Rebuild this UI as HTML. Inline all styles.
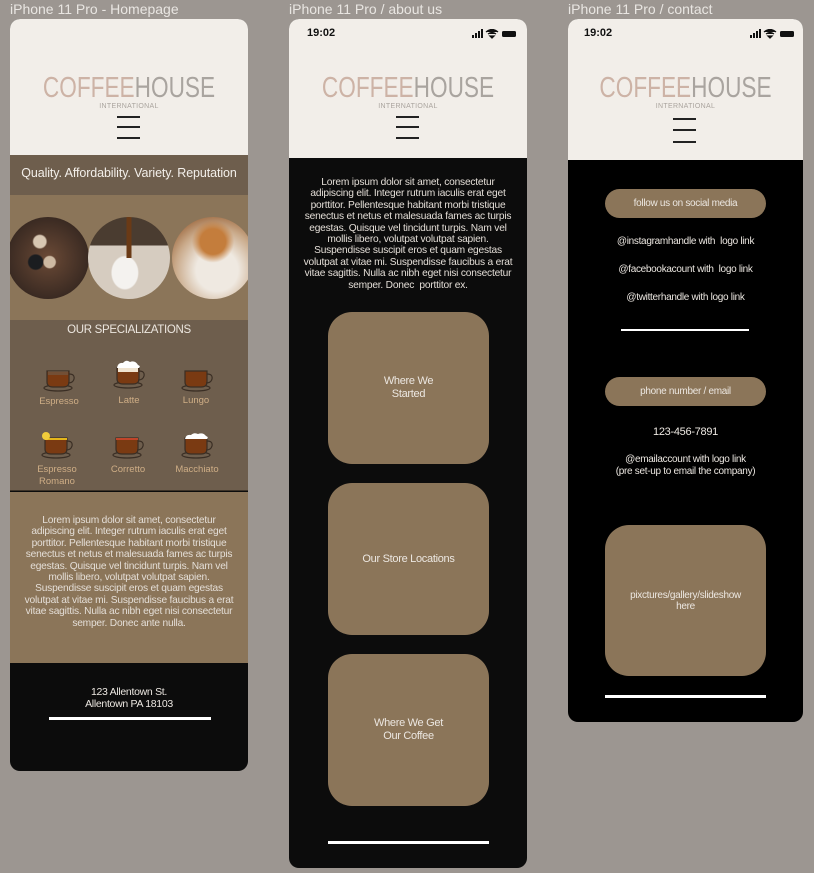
<!DOCTYPE html>
<html><head><meta charset="utf-8">
<style>
*{margin:0;padding:0;box-sizing:border-box}
body{width:814px;height:873px;background:#9c9691;position:relative;overflow:hidden;font-family:"Liberation Sans",sans-serif}
.abs{position:absolute}
.title{color:#e9e6e2;font-size:14px;top:1px}
.phone{position:absolute;border-radius:10px;overflow:hidden}
.cream{background:#f2eee9;position:absolute;left:0;right:0;top:0}
.logo{position:absolute;left:0;right:0;text-align:center;font-size:29px;letter-spacing:0px;font-weight:normal;line-height:30px;transform:scaleX(0.78)}
.logo .c{color:#cdb3a6}.logo .h{color:#a9a49f}
.intl{position:absolute;left:0;right:0;text-align:center;font-size:7px;color:#aaa49e;letter-spacing:0.3px}
.ham{position:absolute;width:23px;height:1.5px;background:#222}
.lorem{position:absolute;text-align:center;color:#e4ded7;font-size:10.2px;line-height:11.4px;letter-spacing:-0.2px}
.card{position:absolute;background:#8b7559;border-radius:24px;color:#ece7e1;font-size:11px;text-align:center;display:flex;align-items:center;justify-content:center;line-height:13px;letter-spacing:-0.3px}
.pill{position:absolute;background:#8b7559;border-radius:15px;color:#ece7e1;font-size:10px;text-align:center;line-height:29px;letter-spacing:-0.3px}
.w{position:absolute;left:0;right:0;text-align:center;color:#ece7e1;font-size:10px;letter-spacing:-0.3px}
.bar{position:absolute;height:3px;background:#fff}
.circ{position:absolute;width:82px;height:82px;border-radius:50%}
.cup{position:absolute;width:34px;height:30px}
.lab{position:absolute;width:70px;text-align:center;color:#cfae86;font-size:9.5px;line-height:12px}
</style></head><body>

<div class="abs title" style="left:10px">iPhone 11 Pro - Homepage</div>
<div class="abs title" style="left:289px">iPhone 11 Pro / about us</div>
<div class="abs title" style="left:568px">iPhone 11 Pro / contact</div>

<!-- PHONE 1 -->
<div class="phone" style="left:10px;top:19px;width:238px;height:752px;background:#0c0c0c">
  <div class="cream" style="height:136px"></div>
  <div class="logo" style="top:54px"><span class="c">COFFEE</span><span class="h">HOUSE</span></div>
  <div class="intl" style="top:84px">INTERNATIONAL</div>
  <div class="ham" style="left:107px;top:97px"></div>
  <div class="ham" style="left:107px;top:107px"></div>
  <div class="ham" style="left:107px;top:118px"></div>
  <div class="abs" style="left:0;right:0;top:136px;height:40px;background:#6e5e4d;color:#f3efea;font-size:12.5px;text-align:center;line-height:37px;letter-spacing:-0.1px">Quality. Affordability. Variety. Reputation</div>
  <div class="abs" style="left:0;right:0;top:176px;height:125px;background:#8b7559"></div>
  <div class="circ" style="left:-3px;top:198px;background:radial-gradient(circle at 40% 30%,#d8c7b2 0 8%,transparent 10%),radial-gradient(circle at 52% 55%,#cdb9a2 0 9%,transparent 11%),radial-gradient(circle at 35% 55%,#1b1d20 0 10%,transparent 12%),radial-gradient(circle,#6b4a36 0,#3a2a22 70%)"></div>
  <div class="circ" style="left:78px;top:198px;background:linear-gradient(90deg,transparent 47%,#6a3a16 47% 53%,transparent 53%) 0 0/100% 50% no-repeat,radial-gradient(ellipse at 45% 68%,#f4f2ef 0 20%,transparent 22%),linear-gradient(180deg,#4a3c30 0 35%,#d6ccc0 35%)"></div>
  <div class="circ" style="left:162px;top:198px;background:radial-gradient(circle at 50% 30%,#c47d3c 0 18%,transparent 30%),radial-gradient(circle at 55% 65%,#efe9e1 0 30%,#c9a989 60%,#a27048 80%)"></div>
  <div class="abs" style="left:0;right:0;top:301px;height:171px;background:#6e5e4d;border-bottom:1px solid #3d3328"></div>
  <div class="abs" style="left:0;right:0;top:305px;text-align:center;color:#ece6df;font-size:11.5px;letter-spacing:-0.3px">OUR SPECIALIZATIONS</div>
  <svg width="0" height="0" style="position:absolute"><defs>
   <g id="cupb"><ellipse cx="15" cy="26" rx="14" ry="3" fill="none" stroke="#3a2e24" stroke-width="1.2"/><path d="M4 9 H26 V20 Q26 25 20 25 H10 Q4 25 4 20 Z" fill="#7a3a12" stroke="#3a2e24" stroke-width="1.2"/><path d="M26 12 Q32 12 31 17 Q30 21 25 21" fill="none" stroke="#3a2e24" stroke-width="1.2"/></g>
  </defs></svg>
  <svg class="cup" style="left:33px;top:343px" viewBox="0 0 34 30"><use href="#cupb"/><rect x="5" y="9" width="20" height="4" fill="#6e5e4d" opacity=".6"/></svg>
  <svg class="cup" style="left:103px;top:340px" viewBox="0 0 34 30"><use href="#cupb"/><rect x="5" y="9" width="20" height="4" fill="#f0e3cf"/><path d="M4 9 Q5 3 10 4 Q13 0 17 3 Q22 1 25 6 Q28 7 26 9 Z" fill="#fff"/></svg>
  <svg class="cup" style="left:171px;top:343px" viewBox="0 0 34 30"><use href="#cupb"/></svg>
  <svg class="cup" style="left:31px;top:410px" viewBox="0 0 34 30"><use href="#cupb"/><rect x="4" y="9" width="22" height="2" fill="#e4b51a"/><circle cx="5" cy="7" r="4" fill="#f1cc3b"/></svg>
  <svg class="cup" style="left:102px;top:410px" viewBox="0 0 34 30"><use href="#cupb"/><rect x="4" y="9" width="22" height="2" fill="#c0452a"/></svg>
  <svg class="cup" style="left:171px;top:410px" viewBox="0 0 34 30"><use href="#cupb"/><path d="M4 10 Q5 5 10 6 Q13 3 17 5 Q22 3 25 7 Q28 8 26 10 Z" fill="#fff"/></svg>
  <div class="lab" style="left:14px;top:377px">Espresso</div>
  <div class="lab" style="left:84px;top:376px">Latte</div>
  <div class="lab" style="left:151px;top:376px">Lungo</div>
  <div class="lab" style="left:12px;top:445px">Espresso<br>Romano</div>
  <div class="lab" style="left:83px;top:445px">Corretto</div>
  <div class="lab" style="left:152px;top:445px">Macchiato</div>
  <div class="abs" style="left:0;right:0;top:473px;height:171px;background:#8b7559"></div>
  <div class="lorem" style="left:10px;right:10px;top:496px">Lorem ipsum dolor sit amet, consectetur adipiscing elit. Integer rutrum iaculis erat eget porttitor. Pellentesque habitant morbi tristique senectus et netus et malesuada fames ac turpis egestas. Quisque vel tincidunt turpis. Nam vel mollis libero, volutpat volutpat sapien. Suspendisse suscipit eros et quam egestas volutpat at vitae mi. Suspendisse faucibus a erat vitae sagittis. Nulla ac nibh eget nisi consectetur semper. Donec ante nulla.</div>
  <div class="w" style="top:667px;font-size:10.5px;line-height:12px">123 Allentown St.<br>Allentown PA 18103</div>
  <div class="bar" style="left:39px;width:162px;top:698px"></div>
</div>

<!-- PHONE 2 -->
<div class="phone" style="left:289px;top:19px;width:238px;height:849px;background:#0c0c0c">
  <div class="cream" style="height:139px"></div>
  <div class="abs" style="left:18px;top:8px;font-size:11px;font-weight:bold;color:#111">19:02</div>
  <svg class="abs" style="left:183px;top:10px" width="48" height="10"><rect x="0" y="6" width="2" height="3" fill="#111"/><rect x="3" y="4" width="2" height="5" fill="#111"/><rect x="6" y="2" width="2" height="7" fill="#111"/><rect x="9" y="0" width="2" height="9" fill="#111"/><path d="M14 3 Q20 -2 26 3 M16 5 Q20 2 24 5 M18 7 L20 9 L22 7 Z" stroke="#111" stroke-width="1.3" fill="#111"/><rect x="30" y="2" width="14" height="6" rx="1.5" fill="#111"/></svg>
  <div class="logo" style="top:54px"><span class="c">COFFEE</span><span class="h">HOUSE</span></div>
  <div class="intl" style="top:84px">INTERNATIONAL</div>
  <div class="ham" style="left:107px;top:97px"></div>
  <div class="ham" style="left:107px;top:107px"></div>
  <div class="ham" style="left:107px;top:118px"></div>
  <div class="lorem" style="left:10px;right:10px;top:158px">Lorem ipsum dolor sit amet, consectetur adipiscing elit. Integer rutrum iaculis erat eget porttitor. Pellentesque habitant morbi tristique senectus et netus et malesuada fames ac turpis egestas. Quisque vel tincidunt turpis. Nam vel mollis libero, volutpat volutpat sapien. Suspendisse suscipit eros et quam egestas volutpat at vitae mi. Suspendisse faucibus a erat vitae sagittis. Nulla ac nibh eget nisi consectetur semper. Donec &nbsp;porttitor ex.</div>
  <div class="card" style="left:39px;top:293px;width:161px;height:152px">Where We<br>Started</div>
  <div class="card" style="left:39px;top:464px;width:161px;height:152px">Our Store Locations</div>
  <div class="card" style="left:39px;top:635px;width:161px;height:152px">Where We Get<br>Our Coffee</div>
  <div class="bar" style="left:39px;width:161px;top:822px"></div>
</div>

<!-- PHONE 3 -->
<div class="phone" style="left:568px;top:19px;width:235px;height:703px;background:#000">
  <div class="cream" style="height:141px"></div>
  <div class="abs" style="left:16px;top:8px;font-size:11px;font-weight:bold;color:#111">19:02</div>
  <svg class="abs" style="left:182px;top:10px" width="48" height="10"><rect x="0" y="6" width="2" height="3" fill="#111"/><rect x="3" y="4" width="2" height="5" fill="#111"/><rect x="6" y="2" width="2" height="7" fill="#111"/><rect x="9" y="0" width="2" height="9" fill="#111"/><path d="M14 3 Q20 -2 26 3 M16 5 Q20 2 24 5 M18 7 L20 9 L22 7 Z" stroke="#111" stroke-width="1.3" fill="#111"/><rect x="30" y="2" width="14" height="6" rx="1.5" fill="#111"/></svg>
  <div class="logo" style="top:54px"><span class="c">COFFEE</span><span class="h">HOUSE</span></div>
  <div class="intl" style="top:84px">INTERNATIONAL</div>
  <div class="ham" style="left:105px;top:99px"></div>
  <div class="ham" style="left:105px;top:110px"></div>
  <div class="ham" style="left:105px;top:122px"></div>
  <div class="pill" style="left:37px;top:170px;width:161px;height:29px">follow us on social media</div>
  <div class="w" style="top:217px">@instagramhandle with &nbsp;logo link</div>
  <div class="w" style="top:245px">@facebookacount with &nbsp;logo link</div>
  <div class="w" style="top:273px">@twitterhandle with logo link</div>
  <div class="bar" style="left:53px;width:128px;top:310px;height:2px"></div>
  <div class="pill" style="left:37px;top:358px;width:161px;height:29px">phone number / email</div>
  <div class="w" style="top:407px;font-size:11px">123-456-7891</div>
  <div class="w" style="top:435px;line-height:12px">@emailaccount with logo link<br>(pre set-up to email the company)</div>
  <div class="card" style="left:37px;top:506px;width:161px;height:151px;font-size:10px;line-height:11px">pixctures/gallery/slideshow<br>here</div>
  <div class="bar" style="left:37px;width:161px;top:676px"></div>
</div>

</body></html>
